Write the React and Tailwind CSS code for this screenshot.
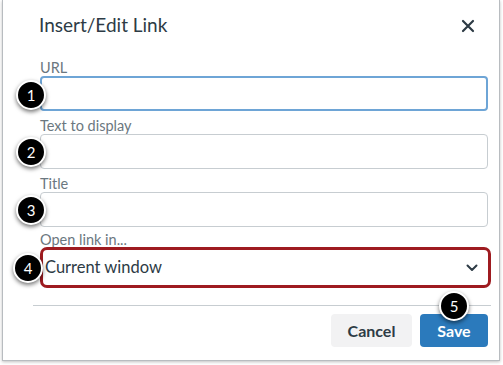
const Badge = ({ n, className }) => (
    <div
        className={`absolute w-[30px] h-[30px] rounded-full bg-black border-2 border-white text-white text-[15px] flex items-center justify-center shadow-[0_2px_4px_rgba(0,0,0,0.55)] ${className}`}
    >
        {n}
    </div>
);

const Field = ({ label, active }) => (
    <div className="flex flex-col">
        <div className="h-[17px] text-[14.5px] leading-[17px] text-[#6b7780]">{label}</div>
        <div
            className={`h-[35px] rounded-[4px] bg-white ${active ? "border-2 border-[#6ea5d6]" : "border border-[#c7cdd1]"}`}
        />
    </div>
);

export default function App() {
    return (
        <div className="w-[503px] h-[365px] bg-white font-['Lato','Liberation_Sans',sans-serif] text-[#2d3b45]">
            <div className="relative ml-[2px] w-[498px] h-[361px] flex flex-col bg-white border-x border-b border-[#b8bcc0] shadow-[0_1px_3px_rgba(0,0,0,0.25)]">
                {/* header */}
                <div className="flex items-center justify-between pl-[36px] pr-[24px] pt-[8px] h-[42px]">
                    <h1 className="text-[19px] leading-[24px]">Insert/Edit Link</h1>
                    <svg width="14" height="14" viewBox="0 0 14 14" className="mt-[1px]">
                        <path d="M2 2 L12 12 M12 2 L2 12" stroke="#2d3b45" strokeWidth="2.2" strokeLinecap="round" />
                    </svg>
                </div>

                {/* form */}
                <div className="flex flex-col gap-[6px] pl-[37px] pr-[11px] pt-[17px]">
                    <Field label="URL" active />
                    <Field label="Text to display" />
                    <Field label="Title" />
                    <div className="flex flex-col">
                        <div className="h-[14px] text-[14.5px] leading-[14px] text-[#6b7780]">Open link in...</div>
                        <div className="mr-[-3px] h-[41px] rounded-[7px] border-[3px] border-[#9e1b20] flex items-center justify-between pl-[2px] pr-[10px]">
                            <span className="text-[16.5px] text-[#2d3b45]">Current window</span>
                            <svg width="12" height="8" viewBox="0 0 12 8">
                                <path d="M1.5 1.5 L6 6 L10.5 1.5" fill="none" stroke="#2d3b45" strokeWidth="2" strokeLinecap="round" strokeLinejoin="round" />
                            </svg>
                        </div>
                    </div>
                </div>

                {/* footer */}
                <div className="flex justify-end gap-[8px] ml-[30px] mr-[8px] mt-[17px] pt-[8px] pr-[3px] border-t border-[#c7cdd1]">
                    <button className="w-[81px] h-[33px] rounded-[4px] bg-[#f2f2f3] text-[#2d3b45] text-[16px] font-bold">
                        Cancel
                    </button>
                    <button className="w-[68px] h-[33px] rounded-[4px] bg-[#2b7abc] text-white text-[16px] font-bold">
                        Save
                    </button>
                </div>

                <Badge n="1" className="left-[13px] top-[80px]" />
                <Badge n="2" className="left-[13px] top-[137px]" />
                <Badge n="3" className="left-[13px] top-[195px]" />
                <Badge n="4" className="left-[10px] top-[253px]" />
                <Badge n="5" className="left-[436px] top-[291px]" />
            </div>
        </div>
    );
}
